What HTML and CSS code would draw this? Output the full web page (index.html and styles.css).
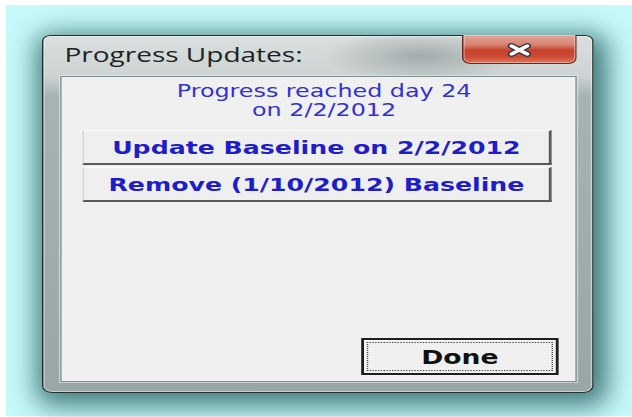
FILE: index.html
```html
<!DOCTYPE html>
<html lang="en">
<head>
<meta charset="utf-8">
<title>Progress Updates:</title>
<link rel="stylesheet" href="styles.css">
</head>
<body>
  <div class="stage">
    <div class="window">
      <div class="titlebar">
        <span class="title">Progress Updates:</span>
        <button class="close" aria-label="Close">
          <svg width="20" height="14" viewBox="0 0 20 14" aria-hidden="true">
            <path d="M4.5 3 L15.5 11 M15.5 3 L4.5 11" stroke="#33343f" stroke-width="5.6" stroke-linecap="round" fill="none"/>
            <path d="M4.5 3 L15.5 11 M15.5 3 L4.5 11" stroke="#ffffff" stroke-width="3.4" stroke-linecap="round" fill="none"/>
          </svg>
        </button>
      </div>
      <div class="client">
        <p class="status">Progress reached day 24<br>on 2/2/2012</p>
        <div class="actions">
          <button class="action">Update Baseline on 2/2/2012</button>
          <button class="action">Remove (1/10/2012) Baseline</button>
        </div>
        <button class="done"><span class="focus">Done</span></button>
      </div>
    </div>
  </div>
</body>
</html>
```

FILE: styles.css
```css
html, body {
  margin: 0;
  padding: 0;
  background: #ffffff;
  height: 417px;
  overflow: hidden;
}

.stage {
  box-sizing: border-box;
  margin: 5px 0 0 6px;
  height: 411px;
  padding: 30px 0 0 36px;
  background: #c6fafa;
}

/* dialog is laid out narrow and widened horizontally */
.window {
  box-sizing: border-box;
  width: 394px;
  height: 358px;
  display: flex;
  flex-direction: column;
  border: 1px solid #26302f;
  border-radius: 6px 6px 7px 7px;
  transform: scaleX(1.4);
  transform-origin: 0 0;
  background:
    radial-gradient(ellipse 70px 26px at 270px 20px, rgba(120,135,135,0.55), rgba(120,135,135,0) 100%),
    linear-gradient(to bottom, #dadede 0px, #cdd3d3 40px, #a6b3b3 60px, #98a6a6 100%);
  box-shadow: 3px 6px 22px 7px rgba(8, 62, 64, 0.68), inset 0 0 0 1px rgba(255,255,255,0.45);
}

.titlebar {
  height: 40px;
  flex: none;
  display: flex;
  justify-content: space-between;
  align-items: flex-start;
}

.title {
  margin: 5px 0 0 15px;
  font-family: "Open Sans", "Noto Sans", sans-serif;
  font-size: 20px;
  font-weight: 500;
  line-height: 27px;
  color: #1f2224;
}

.close {
  box-sizing: border-box;
  width: 82px;
  height: 29px;
  margin: -1px 11px 0 0;
  padding: 0;
  display: flex;
  align-items: center;
  justify-content: center;
  border: 1px solid #5e2a24;
  border-top: 0;
  border-radius: 0 0 6px 6px;
  background: linear-gradient(to bottom, #e3a597 0%, #d88371 35%, #c5412c 55%, #cf4e36 80%, #e2775c 100%);
  box-shadow: inset 0 0 0 1px rgba(255,255,255,0.35);
}

.close svg {
  display: block;
  margin-top: 1px;
}

.client {
  flex: 1;
  margin: 0 11px 10px 12px;
  display: flex;
  flex-direction: column;
  border: 1px solid #7f8f8f;
  background: #f0f0f0;
  box-shadow: 0 0 0 1px rgba(230,236,236,0.6);
}

.status {
  margin: 5px 0 0 0;
  padding-left: 8px;
  text-align: center;
  font-family: "DejaVu Sans", Verdana, sans-serif;
  font-size: 17px;
  line-height: 19px;
  color: #3131d4;
}

.actions {
  margin: 10px 0 0 15px;
  width: 335px;
  display: flex;
  flex-direction: column;
  gap: 2px;
}

.action {
  box-sizing: border-box;
  height: 35px;
  padding: 0;
  border-style: solid;
  border-width: 1px 2px 2px 1px;
  border-color: #fbfbfb #5a5a5a #5a5a5a #d4d4d4;
  background: #efefef;
  font-family: "DejaVu Sans", Verdana, sans-serif;
  font-weight: bold;
  font-size: 18px;
  color: #1d1dcc;
  text-align: center;
}

.done {
  box-sizing: border-box;
  align-self: flex-end;
  margin: auto 12px 6px 0;
  width: 141px;
  height: 37px;
  padding: 2px;
  display: flex;
  border: 2px solid #1e1e1e;
  background: #f0f0f0;
}

.focus {
  flex: 1;
  display: flex;
  align-items: center;
  justify-content: center;
  border: 1px dotted #444;
  font-family: "DejaVu Sans", Verdana, sans-serif;
  font-weight: bold;
  font-size: 19px;
  color: #111;
}
```
